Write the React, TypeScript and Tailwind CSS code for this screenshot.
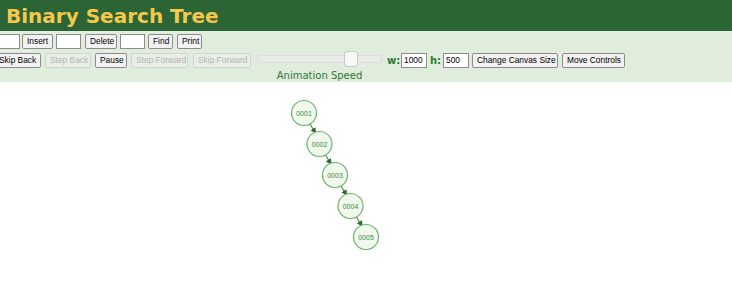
import React from "react";

const sans = { fontFamily: '"Liberation Sans", Arial, sans-serif' };
const verd = { fontFamily: '"DejaVu Sans", Verdana, sans-serif' };

const Btn = ({ children, disabled = false, cls = "" }: { children: React.ReactNode; disabled?: boolean; cls?: string }) => (
  <button
    className={
      "h-[15px] shrink-0 whitespace-nowrap rounded-[2px] border px-[4px] text-[8.4px] leading-none " +
      cls +
      (disabled
        ? " border-[#cfd4cd] bg-[#e9eee7] text-[#b2b6b1]"
        : " border-[#8c8c8c] bg-[#f2f2f2] text-black")
    }
    style={sans}
  >
    {children}
  </button>
);

const Inp = ({ cls, value = "" }: { cls: string; value?: string }) => (
  <div
    className={"h-[15px] shrink-0 border border-[#8c8c8c] bg-white pl-[2px] text-[8.4px] leading-[13px] text-black " + cls}
    style={sans}
  >
    {value}
  </div>
);

const nodes = ["0001", "0002", "0003", "0004", "0005"];

export default function App() {
  return (
    <div className="w-[732px] h-[290px] overflow-hidden bg-white">
      <div className="h-[31px] bg-[#2c6535] pl-[6px] flex items-center">
        <span className="text-[20px] font-bold text-[#f5c84c] leading-none" style={verd}>
          Binary Search Tree
        </span>
      </div>
      <div className="h-[51px] bg-[#e0ecdc] pt-[3px]">
        <div className="flex items-center -ml-[5px]">
          <Inp cls="w-[25px]" />
          <Btn cls="ml-[2px] w-[31px]">Insert</Btn>
          <Inp cls="ml-[3px] w-[25px]" />
          <Btn cls="ml-[4px] w-[32px]">Delete</Btn>
          <Inp cls="ml-[3px] w-[25px]" />
          <Btn cls="ml-[3px] w-[25px]">Find</Btn>
          <Btn cls="ml-[4px] w-[25px]">Print</Btn>
        </div>
        <div className="flex items-start mt-[4px] -ml-[6px]">
          <Btn cls="w-[47px]">Skip Back</Btn>
          <Btn cls="ml-[4px] w-[46px]" disabled>Step Back</Btn>
          <Btn cls="ml-[4px] w-[32px]">Pause</Btn>
          <Btn cls="ml-[4px] w-[57px]" disabled>Step Forward</Btn>
          <Btn cls="ml-[5px] w-[58px]" disabled>Skip Forward</Btn>
          <div className="ml-[6px] flex flex-col items-center w-[125px]">
            <div className="relative w-[125px] h-[15px] -mt-[2px]">
              <div className="absolute left-0 right-0 top-[4px] h-[8px] rounded-[3px] bg-[#e9ebe8] border border-[#d9dcd8]" />
              <div className="absolute left-[87px] top-0 w-[14px] h-[16px] rounded-[3px] bg-[#f8f8f8] border border-[#c8c8c8]" />
            </div>
            <span className="text-[10px] text-[#2f7a2f] leading-none mt-[5px]" style={verd}>
              Animation Speed
            </span>
          </div>
          <div className="flex items-center ml-[5px]" style={verd}>
            <span className="text-[10px] text-[#2f7a2f] font-bold leading-none w-[14px]">w:</span>
            <Inp cls="w-[26px]" value="1000" />
            <span className="text-[10px] text-[#2f7a2f] font-bold leading-none ml-[3px] w-[13px]">h:</span>
            <Inp cls="w-[26px]" value="500" />
            <Btn cls="ml-[3px] w-[86px]">Change Canvas Size</Btn>
            <Btn cls="ml-[4px] w-[63px]">Move Controls</Btn>
          </div>
        </div>
      </div>
      <svg width="732" height="208" className="block">
        <defs>
          <marker id="ah" markerWidth="6" markerHeight="6" refX="5" refY="3" orient="auto">
            <path d="M0,0 L6,3 L0,6 z" fill="#2a6a2a" />
          </marker>
        </defs>
        {nodes.map((n, i) => {
          const cx = 304 + i * 15.5;
          const cy = 31 + i * 31;
          return (
            <g key={n}>
              {i < nodes.length - 1 && (
                <line x1={cx + 6} y1={cy + 11} x2={cx + 11.5} y2={cy + 20} stroke="#2a6a2a" strokeWidth="1" markerEnd="url(#ah)" />
              )}
              <circle cx={cx} cy={cy} r="12.5" fill="#f1f9ef" stroke="#6cb36c" strokeWidth="1.2" />
              <text x={cx} y={cy + 2.5} textAnchor="middle" fontSize="7" fill="#3a8a3a" style={sans}>
                {n}
              </text>
            </g>
          );
        })}
      </svg>
    </div>
  );
}
